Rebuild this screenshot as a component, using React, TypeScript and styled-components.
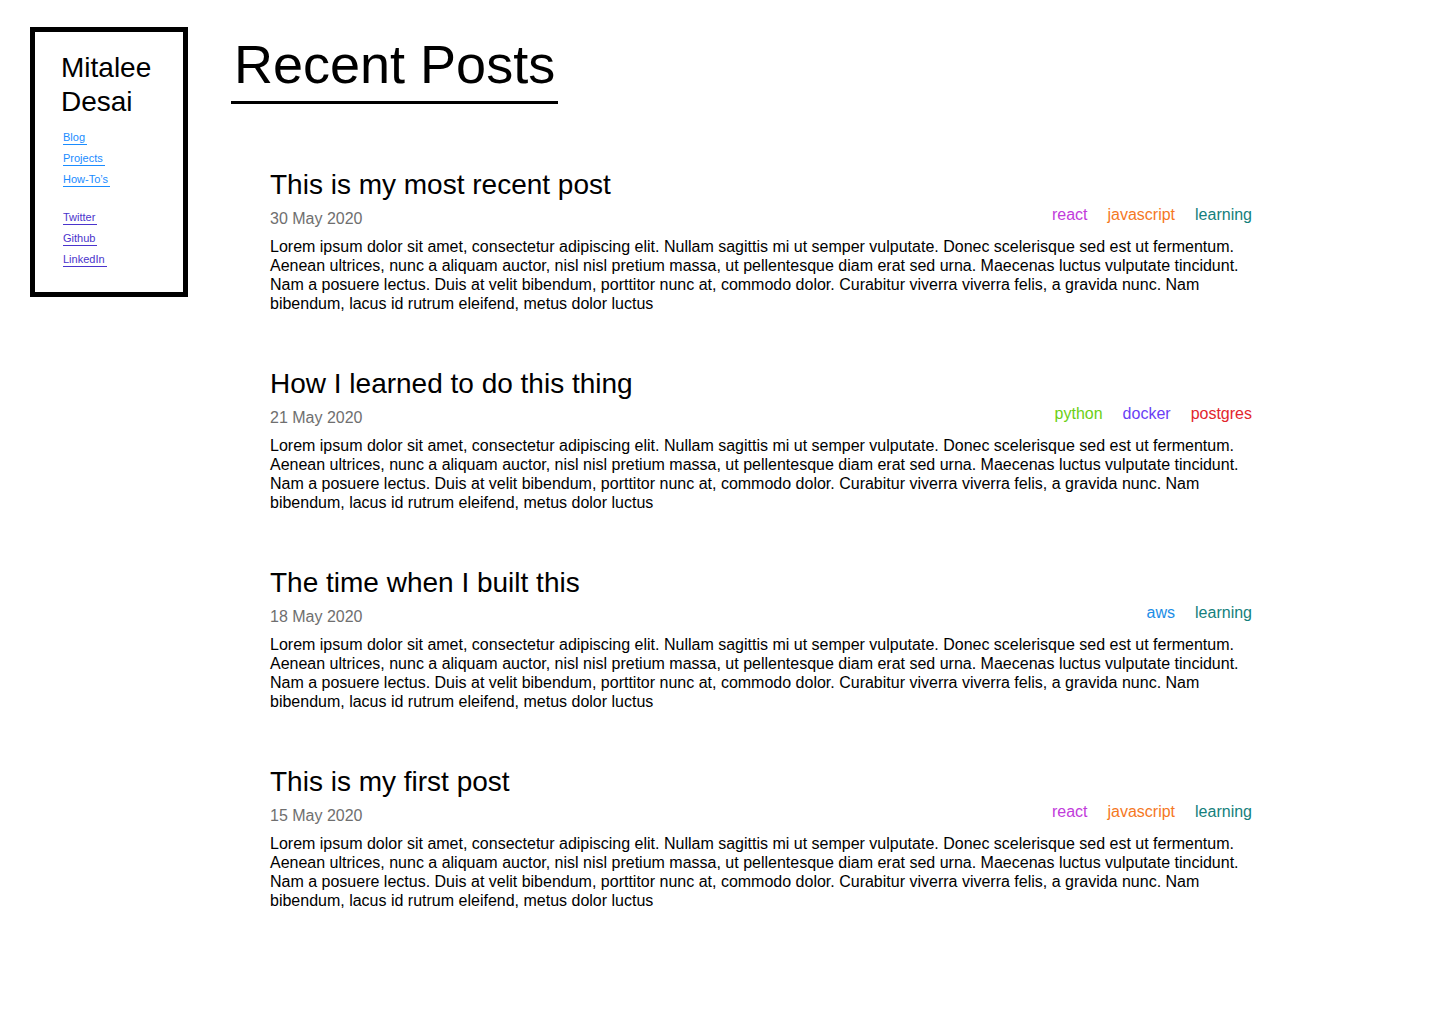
import React from "react";
import styled, { createGlobalStyle } from "styled-components";

const GlobalStyle = createGlobalStyle`
  html, body { margin: 0; padding: 0; background: #fff; }
  body { font-family: "Liberation Sans", Arial, Helvetica, sans-serif; color: #000; }
  * { box-sizing: border-box; }
`;

const Page = styled.div`
  display: flex;
  align-items: flex-start;
  padding: 27px 0 0 30px;
  gap: 43px;
`;

const Sidebar = styled.aside`
  width: 158px;
  border: 5px solid #000;
  padding: 19px 10px 25px 26px;
  flex-shrink: 0;
`;

const Name = styled.h1`
  margin: 0 0 12px;
  font-size: 28px;
  line-height: 34px;
  font-weight: 400;
`;

const LinkGroup = styled.nav`
  display: flex;
  flex-direction: column;
  align-items: flex-start;
  gap: 7px;
  padding-left: 2px;
  & + & { margin-top: 24px; }
`;

const SideLink = styled.a<{ $tone: string }>`
  display: inline-block;
  font-size: 11px;
  line-height: 13px;
  padding-right: 2px;
  color: ${(p) => p.$tone};
  border-bottom: 1px solid ${(p) => p.$tone};
  text-decoration: none;
`;

const Main = styled.main`
  display: flex;
  flex-direction: column;
  align-items: flex-start;
`;

const PageTitle = styled.h1`
  margin: 6px 0 0;
  padding: 0 3px 6px;
  font-size: 54px;
  line-height: 62px;
  font-weight: 400;
  border-bottom: 3px solid #000;
`;

const PostList = styled.div`
  display: flex;
  flex-direction: column;
  gap: 55px;
  margin: 65px 0 0 39px;
  width: 982px;
`;

const Post = styled.article`
  display: flex;
  flex-direction: column;
`;

const PostTitle = styled.h2`
  margin: 0;
  font-size: 28px;
  line-height: 32px;
  font-weight: 400;
`;

const Meta = styled.div`
  display: flex;
  justify-content: space-between;
  align-items: flex-end;
  margin-top: 4px;
`;

const DateText = styled.span`
  font-size: 16px;
  line-height: 19px;
  color: #6f6f6f;
`;

const Tags = styled.div`
  display: flex;
  gap: 20px;
  padding-bottom: 4px;
`;

const Tag = styled.span<{ $tone: string }>`
  font-size: 16px;
  line-height: 19px;
  color: ${(p) => p.$tone};
`;

const Body = styled.p`
  margin: 9px 0 0;
  font-size: 16px;
  line-height: 19px;
`;

const tagColors: Record<string, string> = {
  react: "#c13bdb",
  javascript: "#f5781f",
  learning: "#157f7c",
  python: "#6ccf14",
  docker: "#6a3ff5",
  postgres: "#e2262d",
  aws: "#1b8de6",
};

const lorem =
  "Lorem ipsum dolor sit amet, consectetur adipiscing elit. Nullam sagittis mi ut semper vulputate. Donec scelerisque sed est ut fermentum. Aenean ultrices, nunc a aliquam auctor, nisl nisl pretium massa, ut pellentesque diam erat sed urna. Maecenas luctus vulputate tincidunt. Nam a posuere lectus. Duis at velit bibendum, porttitor nunc at, commodo dolor. Curabitur viverra viverra felis, a gravida nunc. Nam bibendum, lacus id rutrum eleifend, metus dolor luctus";

const posts = [
  { title: "This is my most recent post", date: "30 May 2020", tags: ["react", "javascript", "learning"] },
  { title: "How I learned to do this thing", date: "21 May 2020", tags: ["python", "docker", "postgres"] },
  { title: "The time when I built this", date: "18 May 2020", tags: ["aws", "learning"] },
  { title: "This is my first post", date: "15 May 2020", tags: ["react", "javascript", "learning"] },
];

const primary = "#1a8cff";
const social = "#4a34cc";

export default function App() {
  return (
    <>
      <GlobalStyle />
      <Page>
        <Sidebar>
          <Name>Mitalee Desai</Name>
          <LinkGroup>
            <SideLink $tone={primary} href="#">Blog</SideLink>
            <SideLink $tone={primary} href="#">Projects</SideLink>
            <SideLink $tone={primary} href="#">How-To’s</SideLink>
          </LinkGroup>
          <LinkGroup>
            <SideLink $tone={social} href="#">Twitter</SideLink>
            <SideLink $tone={social} href="#">Github</SideLink>
            <SideLink $tone={social} href="#">LinkedIn</SideLink>
          </LinkGroup>
        </Sidebar>
        <Main>
          <PageTitle>Recent Posts</PageTitle>
          <PostList>
            {posts.map((p) => (
              <Post key={p.title}>
                <PostTitle>{p.title}</PostTitle>
                <Meta>
                  <DateText>{p.date}</DateText>
                  <Tags>
                    {p.tags.map((t) => (
                      <Tag key={t} $tone={tagColors[t]}>{t}</Tag>
                    ))}
                  </Tags>
                </Meta>
                <Body>{lorem}</Body>
              </Post>
            ))}
          </PostList>
        </Main>
      </Page>
    </>
  );
}
